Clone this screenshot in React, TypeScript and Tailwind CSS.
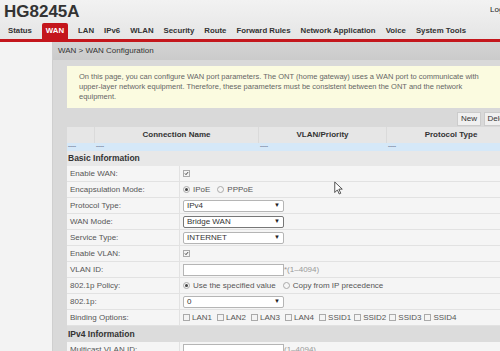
import React from "react";

const navItems = ["Status", "WAN", "LAN", "IPv6", "WLAN", "Security", "Route", "Forward Rules", "Network Application", "Voice", "System Tools"];

function Check(props: {checked?: boolean}) {
	return (
	<span className="inline-flex items-center justify-center w-[7px] h-[7px] border border-[#aaa] bg-[#f4f4f4] shrink-0">
		{props.checked && (
			<svg viewBox="0 0 8 8" className="w-[7px] h-[7px]">
				<path d="M1.5 4 L3.2 5.8 L6.5 1.8" stroke="#333" strokeWidth="1.5" fill="none" />
			</svg>
		)}
	</span>
	);
}

function Radio(props: {checked?: boolean}) {
	return (
	<span className="inline-flex items-center justify-center w-[7px] h-[7px] rounded-full border border-[#aaa] bg-[#f6f6f6] shrink-0">
		{props.checked && <span className="w-[3px] h-[3px] rounded-full bg-[#444]" />}
	</span>
	);
}

function Select(props: {value: string, focused?: boolean}) {
	const border = props.focused ? "border-[#777]" : "border-[#b5b5b5]";
	return (
	<div className={`flex items-center justify-between w-[101px] h-[12px] border ${border} rounded-[2px] bg-white pl-[3px] pr-[3px] text-[8px] text-[#333]`}>
		<span>{props.value}</span>
		<span className="text-[6px] text-[#222]">▼</span>
	</div>
	);
}

function Row(props: {label: string, children?: React.ReactNode}) {
	return (
	<div className="flex h-[16px] border-b border-[#e2e2e2] bg-[#f5f5f5]">
		<div className="w-[113px] shrink-0 flex items-center pl-[3px] border-r border-[#e2e2e2] text-[#555]">{props.label}</div>
		<div className="flex items-center pl-[3px] gap-[3px] text-[#555]">{props.children}</div>
	</div>
	);
}

export default function App() {
	const binds = ["LAN1", "LAN2", "LAN3", "LAN4", "SSID1", "SSID2", "SSID3", "SSID4"];

	return (
	<div className="relative w-[500px] h-[351px] overflow-hidden bg-[#f2f2f2] font-['Liberation_Sans',Arial,sans-serif]">
		<div className="bg-gradient-to-b from-[#f2f2f2] to-[#e4e4e4]">
			<div className="flex justify-between h-[23px]">
				<div className="pl-[4px] pt-[2px] text-[17px] leading-[19px] font-bold text-[#333]">HG8245A</div>
				<div className="pt-[4px] text-[8px] text-[#222] whitespace-nowrap w-[10px]">Logout</div>
			</div>
			<div className="flex items-end h-[19px] gap-[10px] pl-[8px] text-[7.8px] font-bold text-[#333] border-b-[3px] border-[#c4161c]">
				{navItems.map(n => n === "WAN" ? (
					<div key={n} className="h-[16px] px-[4px] flex items-center bg-[#c4161c] text-white rounded-t-[2px]">{n}</div>
				) : (
					<div key={n} className="h-[16px] flex items-center whitespace-nowrap">{n}</div>
				))}
			</div>
		</div>

		<div className="flex">
			<div className="w-[52px] shrink-0 h-[320px] bg-[#f3f3f3]" />
			<div className="flex-1 h-[320px] bg-[#d9d9d9] border-l border-[#cfcfcf]">
				<div className="h-[18px] flex items-center pl-[5px] bg-gradient-to-b from-[#d3d3d3] to-[#cbcbcb] text-[8px] text-[#333]">WAN &gt; WAN Configuration</div>
				<div className="pl-[14px] pt-[6px] w-[470px]">
					<div className="h-[42px] bg-[#fbfbe0] pl-[12px] pt-[6px] text-[7.5px] leading-[10px] text-[#666] whitespace-nowrap">
						On this page, you can configure WAN port parameters. The ONT (home gateway) uses a WAN port to communicate with<br />
						upper-layer network equipment. Therefore, these parameters must be consistent between the ONT and the network<br />
						equipment.
					</div>
					<div className="flex justify-end items-center gap-[3px] mt-[3px] h-[16px] pr-[9px] text-[8px] text-[#333]">
						<div className="h-[14px] w-[24px] flex items-center justify-center bg-[#f0f0f0] border border-[#ccc]">New</div>
						<div className="h-[14px] w-[30px] flex items-center justify-center bg-[#f0f0f0] border border-[#ccc]">Delete</div>
					</div>
					<div className="flex h-[16px] bg-[#e6e6e6] text-[8px] font-bold text-[#333]">
						<div className="w-[28px] border-r border-[#dadada]" />
						<div className="w-[164px] flex items-center justify-center border-r border-[#dadada]">Connection Name</div>
						<div className="w-[128px] flex items-center justify-center border-r border-[#dadada]">VLAN/Priority</div>
						<div className="w-[128px] flex items-center justify-center">Protocol Type</div>
					</div>
					<div className="flex h-[8px] bg-[#d5e8f8] text-[6px] leading-[6px] font-bold text-[#6a7a90]">
						<div className="w-[28px] pl-[1px]">----</div>
						<div className="w-[164px] pl-[1px]">----</div>
						<div className="w-[128px] pl-[1px]">----</div>
						<div className="w-[128px] pl-[1px]">----</div>
					</div>
					<div className="text-[8px]">
						<div className="h-[15px] flex items-center pl-[1px] bg-[#e8e8e8] font-bold text-[#333] text-[8.5px]">Basic Information</div>
						<Row label="Enable WAN:"><Check checked /></Row>
						<Row label="Encapsulation Mode:">
							<Radio checked /><span>IPoE</span><span className="w-[1px]" /><Radio /><span>PPPoE</span>
						</Row>
						<Row label="Protocol Type:"><Select value="IPv4" /></Row>
						<Row label="WAN Mode:"><Select value="Bridge WAN" focused /></Row>
						<Row label="Service Type:"><Select value="INTERNET" /></Row>
						<Row label="Enable VLAN:"><Check checked /></Row>
						<Row label="VLAN ID:">
							<div className="w-[101px] h-[12px] border border-[#b5b5b5] bg-white" />
							<span className="text-[#999] -ml-[3px]">*(1–4094)</span>
						</Row>
						<Row label="802.1p Policy:">
							<Radio checked /><span>Use the specified value</span><span className="w-[1px]" /><Radio /><span>Copy from IP precedence</span>
						</Row>
						<Row label="802.1p:"><Select value="0" /></Row>
						<Row label="Binding Options:">
							{binds.map(b => (
								<span key={b} className={`flex items-center gap-[2px] ${b.startsWith("LAN") ? "mr-[2px]" : "mr-0"}`}><Check /><span>{b}</span></span>
							))}
						</Row>
						<div className="h-[16px] flex items-center pl-[1px] bg-[#dcdcdc] font-bold text-[#333] text-[8.5px]">IPv4 Information</div>
						<Row label="Multicast VLAN ID:">
							<div className="w-[101px] h-[12px] border border-[#b5b5b5] bg-white" />
							<span className="text-[#999] -ml-[3px]">(1–4094)</span>
						</Row>
					</div>
				</div>
			</div>
		</div>

		<svg viewBox="0 0 12 18" className="absolute left-[334px] top-[181px] w-[9px] h-[14px]">
			<path d="M1 1 L1 15 L4.5 11.5 L7 17 L9 16 L6.5 10.5 L11 10.5 Z" fill="white" stroke="#222" strokeWidth="1" />
		</svg>
	</div>
	);
}
